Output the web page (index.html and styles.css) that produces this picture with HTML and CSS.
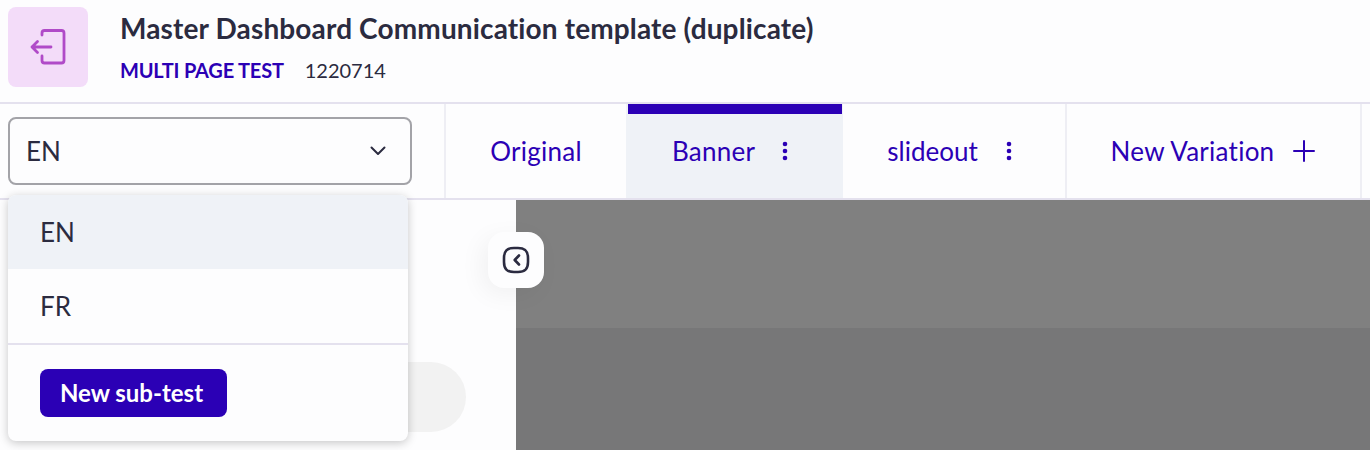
FILE: index.html
```html
<!DOCTYPE html>
<html lang="en">
<head>
<meta charset="utf-8">
<title>Master Dashboard Communication template (duplicate)</title>
<link rel="stylesheet" href="styles.css">
</head>
<body>
<header class="header">
  <div class="logo">
    <svg width="40" height="40" viewBox="0 0 40 40" fill="none" stroke="#b04ac8" stroke-width="2.800" stroke-linecap="round" stroke-linejoin="round">
      <path d="M14 8V6a2.500 2.500 0 0 1 2.500-2.500h17A2.500 2.500 0 0 1 36 6v27.500a2.500 2.500 0 0 1-2.500 2.500h-17a2.500 2.500 0 0 1-2.500-2.500V29"/>
      <path d="M23 20H4M9.500 14.500 4 20l5.500 5.500"/>
    </svg>
  </div>
  <div class="heading">
    <h1 class="title">Master Dashboard Communication template (duplicate)</h1>
    <div class="meta"><span class="type">MULTI PAGE TEST</span><span class="id">1220714</span></div>
  </div>
</header>
<nav class="toolbar">
  <div class="select-cell">
    <div class="select">
      <span>EN</span>
      <svg width="16" height="10" viewBox="0 0 16 10" fill="none" stroke="#2b2b40" stroke-width="2" stroke-linecap="round" stroke-linejoin="round"><path d="M1.500 1.500 8 8l6.500-6.500"/></svg>
    </div>
  </div>
  <div class="tab tab-original">Original</div>
  <div class="tab tab-banner active">Banner
    <svg class="dots" width="6" height="20" viewBox="0 0 6 20" fill="#2b00b5"><circle cx="3" cy="3" r="2.300"/><circle cx="3" cy="10" r="2.300"/><circle cx="3" cy="17" r="2.300"/></svg>
  </div>
  <div class="tab tab-slideout">slideout
    <svg class="dots" width="6" height="20" viewBox="0 0 6 20" fill="#2b00b5"><circle cx="3" cy="3" r="2.300"/><circle cx="3" cy="10" r="2.300"/><circle cx="3" cy="17" r="2.300"/></svg>
  </div>
  <div class="tab tab-new">New Variation
    <svg width="22" height="22" viewBox="0 0 22 22" fill="none" stroke="#2b00b5" stroke-width="2" stroke-linecap="round"><path d="M11 1v20M1 11h20"/></svg>
  </div>
</nav>
<main class="content">
  <section class="panel"><div class="pill"></div></section>
  <section class="preview"><div class="preview-top"></div><div class="preview-bottom"></div></section>
  <div class="dropdown">
    <div class="option selected">EN</div>
    <div class="option">FR</div>
    <div class="dropdown-footer"><button class="new-btn" type="button">New sub-test</button></div>
  </div>
  <div class="collapse">
    <svg width="28" height="28" viewBox="0 0 28 28" fill="none" stroke="#2b2b40" stroke-width="2.600" stroke-linecap="round" stroke-linejoin="round">
      <path d="M12 2h4c7 0 10 3 10 10v4c0 7-3 10-10 10h-4C5 26 2 23 2 16v-4C2 5 5 2 12 2z"/>
      <path d="M17 9.500 12.700 14l4.300 4.500"/>
    </svg>
  </div>
</main>
</body>
</html>
```
FILE: styles.css
```css
* { box-sizing: border-box; }
html, body { margin: 0; padding: 0; }
body {
  width: 1370px;
  height: 450px;
  overflow: hidden;
  background: #fdfdfe;
  font-family: Lato, sans-serif;
  color: #2b2b40;
}
.header {
  display: flex;
  align-items: flex-start;
  height: 104px;
  padding: 7px 8px 0;
  gap: 32px;
  border-bottom: 2px solid #e4e1ee;
}
.logo {
  width: 80px;
  height: 80px;
  border-radius: 8px;
  background: #f3dcf9;
  display: flex;
  align-items: center;
  justify-content: center;
}
.heading { display: flex; flex-direction: column; }
.title {
  margin: 4px 0 0;
  font-size: 28px;
  line-height: 34px;
  letter-spacing: 0.14px;
  font-weight: 700;
}
.meta { display: flex; align-items: center; gap: 21px; margin-top: 13px; height: 24px; }
.type { font-size: 20px; font-weight: 700; letter-spacing: -0.2px; color: #2b00b5; }
.id { font-size: 20px; }
.toolbar {
  display: flex;
  height: 96px;
  border-bottom: 2px solid #e4e1ee;
}
.select-cell {
  width: 446px;
  padding: 13px 0 0 8px;
  border-right: 2px solid #eeeef4;
}
.select {
  width: 404px;
  height: 68px;
  border: 2px solid #a3a3a8;
  border-radius: 8px;
  padding: 0 24px 0 16px;
  display: flex;
  align-items: center;
  justify-content: space-between;
  font-size: 26px;
}
.tab {
  position: relative;
  display: flex;
  align-items: center;
  justify-content: center;
  gap: 20px;
  font-size: 26px;
  letter-spacing: 0.25px;
  color: #2b00b5;
  border-right: 2px solid #eeeef4;
}
.tab-original { width: 180px; border-right: 0; }
.tab-banner { width: 217px; gap: 27px; padding-right: 7px; }
.tab-slideout { width: 224px; gap: 28px; padding-right: 9px; letter-spacing: 0; }
.tab-new { width: 295px; gap: 19px; padding-right: 1px; }
.active {
  background: #eff2f7;
  border-right-color: #eff2f7;
}
.active::before {
  content: "";
  position: absolute;
  top: 0;
  left: 2px;
  right: -1px;
  height: 10px;
  background: #2b00b5;
}
.content {
  position: relative;
  display: flex;
  height: 250px;
}
.panel { width: 516px; padding: 162px 0 0 32px; }
.pill {
  width: 434px;
  height: 70px;
  border-radius: 35px;
  background: #f2f2f2;
}
.preview { flex: 1; display: flex; flex-direction: column; }
.preview-top { height: 128px; background: #808080; }
.preview-bottom { flex: 1; background: #777778; }
.dropdown {
  position: absolute;
  left: 8px;
  top: -5px;
  width: 400px;
  height: 246px;
  border-radius: 8px;
  background: #fdfdfe;
  overflow: hidden;
  box-shadow: 0 2px 10px rgba(0, 0, 0, 0.22);
}
.option {
  height: 74px;
  padding-left: 32px;
  display: flex;
  align-items: center;
  font-size: 26px;
}
.selected { background: #eff2f7; }
.dropdown-footer {
  border-top: 2px solid #e4e1ee;
  padding: 24px 0 0 32px;
}
.new-btn {
  width: 187px;
  height: 48px;
  padding: 0 4px 2px 0;
  border: 0;
  border-radius: 8px;
  background: #2b00b5;
  color: #ffffff;
  font-family: inherit;
  font-size: 24px;
  font-weight: 700;
}
.collapse {
  position: absolute;
  left: 488px;
  top: 32px;
  width: 56px;
  height: 56px;
  border-radius: 16px;
  background: #fdfdfe;
  display: flex;
  align-items: center;
  justify-content: center;
  box-shadow: -6px 6px 24px rgba(0, 0, 0, 0.05);
}
```
